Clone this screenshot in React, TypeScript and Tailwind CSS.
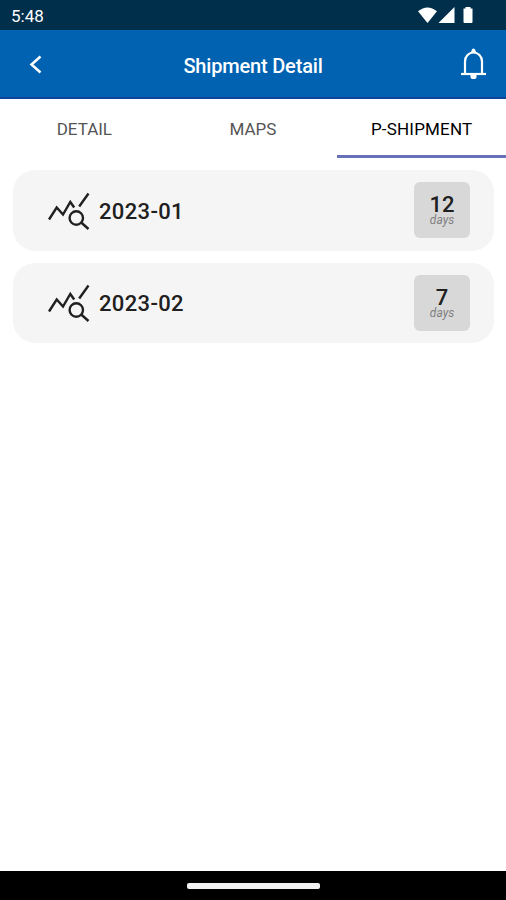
type Period = { month: string; days: number }

const periods: Period[] = [
  { month: '2023-01', days: 12 },
  { month: '2023-02', days: 7 },
]

const tabs = ['DETAIL', 'MAPS', 'P-SHIPMENT']
const activeTab = 'P-SHIPMENT'

export default function App() {
  return (
    <div className="w-full h-screen flex flex-col bg-white overflow-hidden font-['Roboto',sans-serif]">
      <StatusBar />
      <Header />
      <Tabs />
      <main className="flex-1 flex flex-col gap-3 pl-[13px] pr-3 pt-3">
        {periods.map((p) => (
          <PeriodCard key={p.month} period={p} />
        ))}
      </main>
      <footer className="h-[29px] shrink-0 flex justify-center bg-black pt-[11.500px] pl-px">
        <div className="w-[133px] h-[6px] rounded-[2px] bg-[#f2f2f2]" />
      </footer>
    </div>
  )
}

function StatusBar() {
  return (
    <div className="h-[30px] shrink-0 flex items-center justify-between bg-[#002f4c] pl-[11px] pr-[32px] text-white">
      <span className="text-[17px] leading-5 pt-px">5:48</span>
      <svg width="56" height="17" viewBox="0 0 56 17" fill="currentColor">
        <path d="M0 4.2Q9.5-3.4 19 4.2L9.5 16z" />
        <path d="M36.500 0V16H20.500z" />
        <path d="M47.500 0h5v1.500h2V15q0 1-1 1h-7q-1 0-1-1V1.500h2z" />
      </svg>
    </div>
  )
}

function Header() {
  return (
    <header className="h-[69px] shrink-0 grid grid-cols-[1fr_auto_1fr] items-center bg-[#0062b1] border-b-2 border-[#0b459c] px-5 text-white">
      <svg className="ml-[9px] mt-px" width="13" height="19" viewBox="0 0 13 19" fill="none" stroke="currentColor" strokeWidth="2.500">
        <path d="M11.500 1.500L2.500 9.500l9 8" />
      </svg>
      <h1 className="text-[20px] leading-6 font-medium tracking-[-0.18px] pt-1">Shipment Detail</h1>
      {/* Bell */}
      <svg className="justify-self-end" width="25" height="32" viewBox="0 0 25 32" fill="none" stroke="currentColor" strokeWidth="2.200">
        <path d="M4 25.500V13.500C4 8 8 4.500 12.500 4.500S21 8 21 13.500v12" />
        <path d="M0 26h25" />
        <path d="M9.500 5l1.500-3.500q1.500-2 3 0L15.500 5zM9.500 27h6v2q0 2-3 2t-3-2z" fill="currentColor" stroke="none" />
      </svg>
    </header>
  )
}

function Tabs() {
  return (
    <nav className="h-[59px] shrink-0 grid grid-cols-3">
      {tabs.map((tab) => (
        <button
          key={tab}
          className={[
            'flex items-center justify-center border-b-[3px] pt-[5px] text-[17px]',
            tab === activeTab ? 'border-[#6671b8] text-black tracking-[0.2px]' : 'border-transparent text-[#555555]',
          ].join(' ')}
        >
          {tab}
        </button>
      ))}
    </nav>
  )
}

function PeriodCard({ period }: { period: Period }) {
  return (
    <section className="h-[80.500px] shrink-0 flex items-center rounded-[22px] bg-[#f5f5f5] pl-[35px] pr-6">
      <TrendSearchIcon />
      <span className="ml-[9px] flex-1 pt-[3px] text-[22px] leading-7 font-medium tracking-[0.35px] text-[#202020]">{period.month}</span>
      <div className="size-14 flex flex-col items-center rounded-[6px] bg-[#d8d8d8] pt-[13px]">
        <span className="text-[22px] leading-5 font-medium text-[#202020]">{period.days}</span>
        <span className="text-[12px] leading-[11px] italic text-[#808080]">days</span>
      </div>
    </section>
  )
}

function TrendSearchIcon() {
  return (
    <svg className="mt-px" width="42" height="38" viewBox="0 0 42 38" fill="none" stroke="#202020" strokeWidth="2.400">
      <path d="M1 27.500L8.700 15.500l6.300 7L22.300 10l3.900 5.500M31.200 14.500L40.500 1.500" />
      <circle cx="28.300" cy="26" r="6.700" />
      <path d="M33.200 30.500l7.300 6.500" />
    </svg>
  )
}
